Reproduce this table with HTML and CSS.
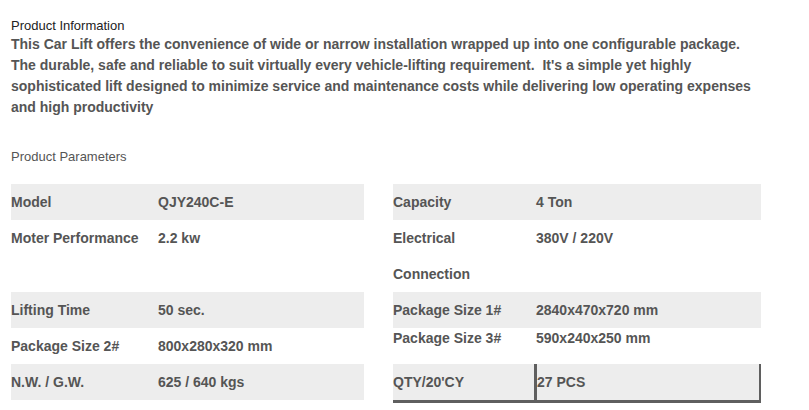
FILE: index.html
```html
<!DOCTYPE html>
<html>
<head>
<meta charset="utf-8">
<link rel="stylesheet" href="styles.css">
</head>
<body>
<div class="page">
  <h3 class="info-title">Product Information</h3>
  <p class="info-text">This Car Lift offers the convenience of wide or narrow installation wrapped up into one configurable package.<br>The durable, safe and reliable to suit virtually every vehicle-lifting requirement.&nbsp; It's a simple yet highly sophisticated lift designed to minimize service and maintenance costs while delivering low operating expenses and high productivity</p>
  <h4 class="params-title">Product Parameters</h4>
  <div class="tables">
    <div class="ptable left">
      <div class="row gray"><div class="lab">Model</div><div class="val">QJY240C-E</div></div>
      <div class="row tall"><div class="lab">Moter Performance</div><div class="val">2.2 kw</div></div>
      <div class="row gray"><div class="lab">Lifting Time</div><div class="val">50 sec.</div></div>
      <div class="row"><div class="lab">Package Size 2#</div><div class="val">800x280x320 mm</div></div>
      <div class="row gray"><div class="lab">N.W. / G.W.</div><div class="val">625 / 640 kgs</div></div>
    </div>
    <div class="ptable right">
      <div class="row gray"><div class="lab">Capacity</div><div class="val">4 Ton</div></div>
      <div class="row tall"><div class="lab">Electrical<br>Connection</div><div class="val">380V / 220V</div></div>
      <div class="row gray"><div class="lab">Package Size 1#</div><div class="val">2840x470x720 mm</div></div>
      <div class="row high"><div class="lab">Package Size 3#</div><div class="val">590x240x250 mm</div></div>
      <div class="row gray boxed"><div class="lab">QTY/20'CY</div><div class="val">27 PCS</div></div>
    </div>
  </div>
</div>
</body>
</html>
```
FILE: styles.css
```css
html, body {
  margin: 0;
  padding: 0;
  background: #fff;
}
.page {
  padding: 0 11px;
  font-family: "Liberation Sans", Arial, sans-serif;
  color: #555;
}
.info-title {
  margin: 17px 0 0;
  font-size: 13px;
  font-weight: normal;
  line-height: 17px;
  color: #222;
}
.info-text {
  margin: 0;
  width: 760px;
  font-size: 14px;
  font-weight: bold;
  line-height: 21px;
  color: #555;
}
.params-title {
  margin: 31px 0 0;
  font-size: 13px;
  font-weight: normal;
  line-height: 16px;
  color: #555;
}
.tables {
  display: flex;
  gap: 29px;
  margin-top: 19px;
}
.ptable {
  display: flex;
  flex-direction: column;
}
.ptable.left { width: 353px; }
.ptable.right { width: 368px; }
.row {
  display: flex;
  height: 36px;
  line-height: 36px;
  font-size: 14px;
  font-weight: bold;
  color: #555;
}
.row.gray { background: #ededed; }
.row.tall { height: 72px; }
.left .lab { width: 147px; }
.right .lab { width: 143px; }
.row.high { line-height: 20px; }
.row.boxed {
  border-bottom: 3px solid #5f5f5f;
  border-right: 2px solid #5f5f5f;
}
.row.boxed .lab {
  width: 141px;
  border-right: 3px solid #5f5f5f;
}
```
